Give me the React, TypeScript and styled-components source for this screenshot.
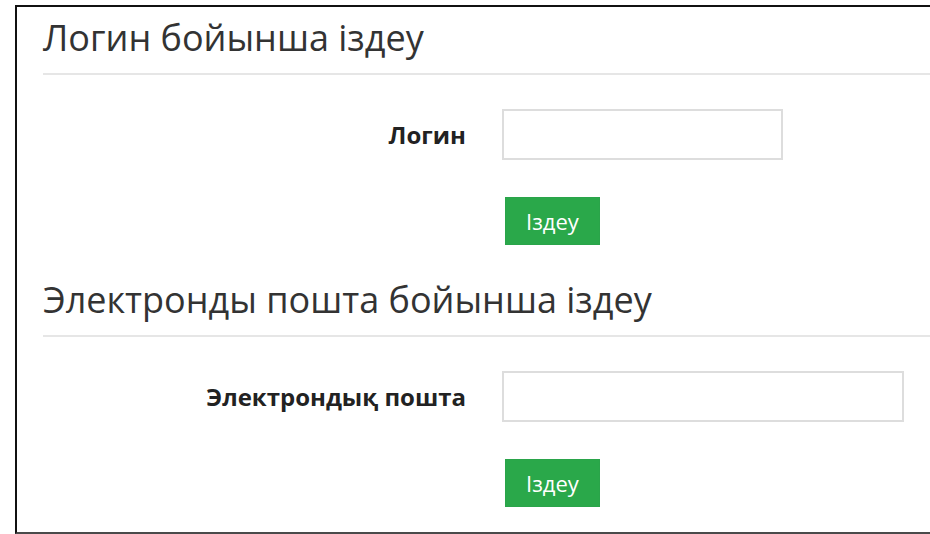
import React, { FC } from 'react';
import styled, { createGlobalStyle } from 'styled-components';

const GlobalStyle = createGlobalStyle`
  html, body {
    margin: 0;
    padding: 0;
    background-color: #ffffff;
  }

  body {
    font-family: 'Open Sans', 'Liberation Sans', sans-serif;
    color: #333333;
    overflow: hidden;
  }
`;

type SearchBlockProps = {
  title: string;
  label: string;
  inputWidth: number;
};

const SearchBlock: FC<SearchBlockProps> = ({ title, label, inputWidth }) => (
  <Section>
    <Title>{title}</Title>
    <Divider />
    <FormRow>
      <Label>{label}</Label>
      <Input type="text" width={inputWidth} />
    </FormRow>
    <ButtonRow>
      <SearchButton type="button">Іздеу</SearchButton>
    </ButtonRow>
  </Section>
);

const App: FC = () => (
  <>
    <GlobalStyle />
    <Frame>
      <SearchBlock title="Логин бойынша іздеу" label="Логин" inputWidth={281} />
      <SearchBlock title="Электронды пошта бойынша іздеу" label="Электрондық пошта" inputWidth={402} />
    </Frame>
  </>
);

const Frame = styled.main`
  height: 529px;
  box-sizing: border-box;
  margin: 5px 0 0 15px;
  padding: 0 0 0 26px;
  border-top: 2px solid #111111;
  border-left: 2px solid #111111;
  border-bottom: 2px solid #4a4a4a;
`;

const Section = styled.section`
  display: flex;
  flex-direction: column;
  padding-top: 9px;

  & + & {
    padding-top: 33px;
  }
`;

const Title = styled.h3`
  margin: 0;
  font-size: 36px;
  font-weight: 400;
  line-height: 44px;
  color: #333333;
`;

const Divider = styled.div`
  height: 2px;
  margin-top: 13px;
  background-color: #e6e6e6;
`;

const FormRow = styled.div`
  display: grid;
  grid-template-columns: 423px 1fr;
  column-gap: 36px;
  align-items: center;
  margin-top: 34px;
`;

const Label = styled.label`
  text-align: right;
  font-size: 24px;
  font-weight: 700;
  color: #222222;
`;

const Input = styled.input<{ width: number }>`
  width: ${({ width }) => width}px;
  height: 51px;
  box-sizing: border-box;
  padding: 0 12px;
  border: 2px solid #dddddd;
  border-radius: 0;
  background-color: #ffffff;
  outline: none;
`;

const ButtonRow = styled.div`
  margin: 37px 0 0 462px;
`;

const SearchButton = styled.button`
  width: 95px;
  height: 48px;
  padding: 0;
  border: 1px solid #2aa44a;
  border-radius: 0;
  background-color: #2aa84a;
  font-family: 'Open Sans', 'Liberation Sans', sans-serif;
  font-size: 22px;
  font-weight: 400;
  color: #ffffff;
  cursor: pointer;
`;

export default App;
